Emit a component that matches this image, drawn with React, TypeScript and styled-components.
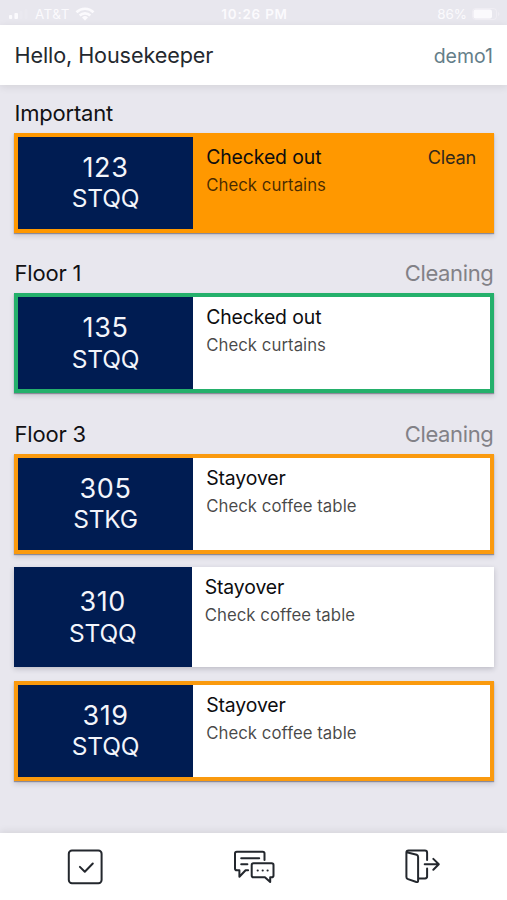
import React from "react";
import styled, { createGlobalStyle } from "styled-components";

const GlobalStyle = createGlobalStyle`
  * { box-sizing: border-box; }
  body { margin: 0; background: #e8e7ee; }
`;

const Screen = styled.div`
  width: 100%;
  height: 900px;
  display: flex;
  flex-direction: column;
  overflow: hidden;
  background: #e8e7ee;
  color: #111114;
  font-family: Inter, "Liberation Sans", sans-serif;
  white-space: nowrap;
`;

const StatusBar = styled.div`
  height: 25px;
  flex: none;
  display: grid;
  grid-template-columns: 1fr auto 1fr;
  align-items: center;
  padding: 3px 7px 0 9px;
  color: #fbfafd;
  font-size: 13.4px;
  line-height: 20px;
`;

const StatusGroup = styled.div<{ $end?: boolean }>`
  display: flex;
  align-items: center;
  justify-content: ${(p) => (p.$end ? "flex-end" : "flex-start")};
  gap: 5px;
`;

const Carrier = styled.span`
  margin-left: 1px;
  letter-spacing: 0.5px;
`;

const Clock = styled.span`
  font-weight: 600;
  letter-spacing: 0.8px;
`;

const Header = styled.header`
  height: 60px;
  flex: none;
  display: flex;
  align-items: center;
  justify-content: space-between;
  padding: 0 14px 0 14.5px;
  background: #fff;
  box-shadow: 0 2px 8px rgba(0, 0, 0, 0.09);
`;

const Greeting = styled.h1`
  margin: 0;
  font-size: 21.6px;
  font-weight: 400;
  letter-spacing: -0.1px;
  color: #23282e;
`;

const UserName = styled.span`
  padding-top: 1px;
  font-size: 19.5px;
  color: #647e89;
`;

const Main = styled.main`
  flex: 1;
  padding: 11.9px 13px 0 14px;
`;

const Section = styled.section`
  & + & {
    margin-top: 24.4px;
  }
`;

const SectionHead = styled.div`
  height: 36px;
  display: flex;
  justify-content: space-between;
  padding: 0 0.5px;
  font-size: 22px;
  line-height: 32px;
`;

const SectionName = styled.h2`
  margin: 0;
  font-size: inherit;
  font-weight: 400;
  letter-spacing: -0.2px;
`;

const SectionState = styled.span`
  color: #828187;
  letter-spacing: -0.35px;
`;

const CardList = styled.div`
  display: flex;
  flex-direction: column;
  gap: 13.5px;
`;

const Card = styled.article<{ $border?: string; $fill?: string }>`
  height: 100px;
  display: grid;
  grid-template-columns: ${(p) => (p.$border ? "175px" : "177.5px")} 1fr;
  background: ${(p) => p.$fill ?? "#fff"};
  border: ${(p) => (p.$border ? `4px solid ${p.$border}` : "0")};
  box-shadow: ${(p) =>
    p.$border
      ? "0 1px 1px rgba(40, 40, 60, 0.4), 0 3px 5px rgba(40, 40, 60, 0.17)"
      : "0 2px 5px rgba(40, 40, 60, 0.22)"};
`;

const Room = styled.div`
  display: flex;
  flex-direction: column;
  align-items: center;
  justify-content: center;
  padding-top: 1px;
  background: #001c52;
  color: #f3f5fb;
  line-height: 30.5px;
`;

const RoomNumber = styled.span`
  font-size: 27px;
  letter-spacing: 0.6px;
`;

const RoomType = styled.span`
  font-size: 24.5px;
  letter-spacing: -0.2px;
`;

const Details = styled.div<{ $inset: boolean }>`
  display: flex;
  justify-content: space-between;
  padding: ${(p) => (p.$inset ? "6.2px 14px 0 13.2px" : "6px 18px 0 13.2px")};
  line-height: 28px;
`;

const TaskTitle = styled.div`
  font-size: 19.4px;
  letter-spacing: -0.1px;
  color: #0d0d0f;
`;

const TaskNote = styled.div`
  font-size: 16.8px;
  letter-spacing: 0.03px;
  color: rgba(0, 0, 0, 0.72);
`;

const Action = styled.span`
  font-size: 18.2px;
  letter-spacing: -0.25px;
  color: #30281c;
`;

const TabBar = styled.nav`
  height: 67px;
  flex: none;
  display: grid;
  grid-template-columns: repeat(3, 1fr);
  background: #fff;
  box-shadow: 0 -2px 7px rgba(0, 0, 0, 0.08);
`;

const Tab = styled.a`
  display: flex;
  align-items: center;
  justify-content: center;
  color: #23272d;
`;

const Icon = styled.svg`
  fill: none;
  stroke: currentColor;
  stroke-width: 2;
  stroke-linecap: round;
  stroke-linejoin: round;
`;

const SignalIcon = () => (
  <svg width="20" height="14" viewBox="0 0 20 14" fill="currentColor">
    <rect x="0" y="8" width="3.2" height="4" rx="1" />
    <rect x="5.4" y="6" width="3.6" height="6" rx="1" />
    <rect x="10.7" y="4" width="3" height="8" rx="1" opacity=".15" />
    <rect x="15.7" y="2" width="3" height="10" rx="1" opacity=".15" />
  </svg>
);

const WifiIcon = () => (
  <svg width="20" height="14" viewBox="0 0 20 14" fill="none" stroke="currentColor" strokeWidth="2.6">
    <path d="M1.5 5.2a12.2 12.2 0 0 1 17 0M4.7 8.5a7.6 7.6 0 0 1 10.6 0" />
    <path d="M10 13.5l-3-3a4.3 4.3 0 0 1 6 0z" fill="currentColor" stroke="none" />
  </svg>
);

const BatteryIcon = () => (
  <svg width="28" height="12" viewBox="0 0 28 12">
    <rect x=".5" y=".5" width="24" height="11" rx="3" fill="none" stroke="currentColor" opacity=".35" />
    <rect x="1.5" y="1.5" width="18.5" height="9" rx="2" fill="currentColor" />
    <path d="M26 4v4q1.5-.7 1.5-2T26 4" fill="currentColor" opacity=".35" />
  </svg>
);

const CheckIcon = () => (
  <Icon width="36" height="36" viewBox="0 0 36 36">
    <rect x="1.8" y="1.5" width="32.8" height="32.8" rx="3.2" />
    <path d="M12.9 17.9l4.9 4.8 8-8.2" />
  </Icon>
);

const ChatIcon = () => (
  <Icon width="42" height="34" viewBox="0 0 42 34">
    <path d="M31.5 10V3.6q0-1.8-1.8-1.8H3.8Q2 1.8 2 3.6v14.8q0 1.8 1.8 1.8h2.6v6.6l6.2-6.6h2.5" />
    <path d="M8.2 8.3h18M8.2 14.2h6.2" />
    <path d="M20.5 13.2h18.2q1.8 0 1.8 1.8v10.4q0 1.8-1.8 1.8h-1.5V32l-5.3-4.8H20.5q-1.8 0-1.8-1.8V15q0-1.8 1.8-1.8z" />
    <path d="M24.6 20.4h.2M29.6 20.4h.2M34.5 20.4h.2" />
  </Icon>
);

const ExitIcon = () => (
  <Icon width="36" height="36" viewBox="0 0 36 36">
    <path d="M1.7 3.2l10 2.6q1.4.5 1.4 2.1v23.9q0 1.7-1.7 1.2L3 30.1q-1.6-.5-1.6-2.1V3.7q0-2.1 2.1-2.1h16.4q2.2 0 2.2 2.2v7.2M22.1 19.6v8q0 1.8-2 1.8h-6" />
    <path d="M19.7 15.3h14M28.3 9.9l5.5 5.4-5.5 5.4" />
  </Icon>
);

const ORANGE = "#fa9a0e";
const GREEN = "#24b06b";

interface RoomTask {
  room: string;
  type: string;
  title: string;
  note: string;
  border?: string;
  fill?: string;
  action?: string;
}

const sections: { name: string; state?: string; tasks: RoomTask[] }[] = [
  {
    name: "Important",
    tasks: [
      { room: "123", type: "STQQ", title: "Checked out", note: "Check curtains", border: "#ff9800", fill: "#ff9800", action: "Clean" },
    ],
  },
  {
    name: "Floor 1",
    state: "Cleaning",
    tasks: [{ room: "135", type: "STQQ", title: "Checked out", note: "Check curtains", border: GREEN }],
  },
  {
    name: "Floor 3",
    state: "Cleaning",
    tasks: [
      { room: "305", type: "STKG", title: "Stayover", note: "Check coffee table", border: ORANGE },
      { room: "310", type: "STQQ", title: "Stayover", note: "Check coffee table" },
      { room: "319", type: "STQQ", title: "Stayover", note: "Check coffee table", border: ORANGE },
    ],
  },
];

export default function App() {
  return (
    <Screen>
      <GlobalStyle />
      <StatusBar>
        <StatusGroup>
          <SignalIcon />
          <Carrier>AT&amp;T</Carrier>
          <WifiIcon />
        </StatusGroup>
        <Clock>10:26 PM</Clock>
        <StatusGroup $end>
          <span>86%</span>
          <BatteryIcon />
        </StatusGroup>
      </StatusBar>
      <Header>
        <Greeting>Hello, Housekeeper</Greeting>
        <UserName>demo1</UserName>
      </Header>
      <Main>
        {sections.map((s) => (
          <Section key={s.name}>
            <SectionHead>
              <SectionName>{s.name}</SectionName>
              {s.state && <SectionState>{s.state}</SectionState>}
            </SectionHead>
            <CardList>
              {s.tasks.map((t) => (
                <Card key={t.room} $border={t.border} $fill={t.fill}>
                  <Room>
                    <RoomNumber>{t.room}</RoomNumber>
                    <RoomType>{t.type}</RoomType>
                  </Room>
                  <Details $inset={!!t.border}>
                    <div>
                      <TaskTitle>{t.title}</TaskTitle>
                      <TaskNote>{t.note}</TaskNote>
                    </div>
                    {t.action && <Action>{t.action}</Action>}
                  </Details>
                </Card>
              ))}
            </CardList>
          </Section>
        ))}
      </Main>
      <TabBar>
        <Tab><CheckIcon /></Tab>
        <Tab><ChatIcon /></Tab>
        <Tab><ExitIcon /></Tab>
      </TabBar>
    </Screen>
  );
}
